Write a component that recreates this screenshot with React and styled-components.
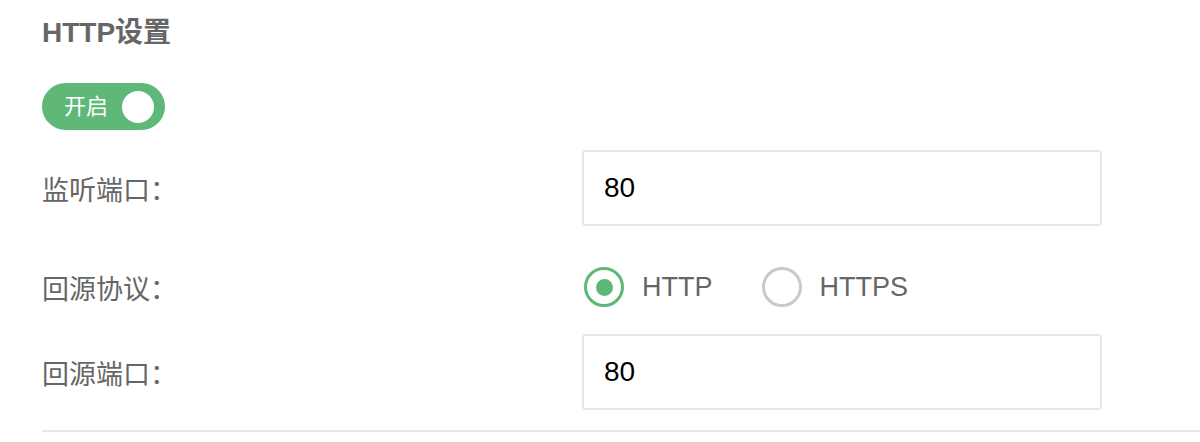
import React, { useState } from "react";
import styled, { createGlobalStyle } from "styled-components";

const GlobalStyle = createGlobalStyle`
  body {
    margin: 0;
    background: #fff;
    font-family: "Liberation Sans", "Noto Sans CJK SC", sans-serif;
  }
`;

const Page = styled.div`
  padding: 16px 0 0 42px;
`;

const Title = styled.h2`
  margin: 0;
  font-size: 28px;
  line-height: 34px;
  font-weight: bold;
  color: #666;
`;

const Switch = styled.div`
  margin-top: 33px;
  width: 123px;
  height: 47px;
  border-radius: 24px;
  background: ${p => (p.$on ? "#5fb878" : "#d2d2d2")};
  display: flex;
  align-items: center;
  justify-content: space-between;
  padding: 0 11px 0 22px;
  box-sizing: border-box;
  cursor: pointer;
`;

const SwitchText = styled.span`
  color: #fff;
  font-size: 22px;
  line-height: 1;
`;

const Knob = styled.span`
  width: 32px;
  height: 32px;
  border-radius: 50%;
  background: #fff;
`;

const Row = styled.div`
  display: flex;
  align-items: center;
  height: ${p => p.$h}px;
  margin-top: ${p => p.$mt}px;
`;

const Label = styled.div`
  width: 540px;
  font-size: 27px;
  color: #666;
`;

const Input = styled.input`
  width: 520px;
  height: 76px;
  box-sizing: border-box;
  border: 2px solid #e6e6e6;
  border-radius: 4px;
  padding: 0 20px;
  font-family: "Liberation Sans", sans-serif;
  font-size: 28px;
  color: #000;
  outline: none;
`;

const RadioGroup = styled.div`
  display: flex;
  align-items: center;
  gap: 47px;
`;

const RadioItem = styled.label`
  display: flex;
  align-items: center;
  gap: 18px;
  cursor: pointer;
  font-size: 27px;
  color: #666;
`;

const RadioCircle = styled.span`
  margin-left: 2px;
  width: 40px;
  height: 40px;
  box-sizing: border-box;
  border-radius: 50%;
  border: 3px solid ${p => (p.$checked ? "#5fb878" : "#c9c9c9")};
  display: flex;
  align-items: center;
  justify-content: center;

  &::after {
    content: "";
    width: 17px;
    height: 17px;
    border-radius: 50%;
    background: #5fb878;
    display: ${p => (p.$checked ? "block" : "none")};
  }
`;

const Divider = styled.hr`
  margin: 20px 0 0;
  border: none;
  border-top: 2px solid #e6e6e6;
`;

export default function App() {
  const [on, setOn] = useState(true);
  const [proto, setProto] = useState("HTTP");

  return (
    <Page>
      <GlobalStyle />
      <Title>HTTP设置</Title>
      <Switch $on={on} onClick={() => setOn(v => !v)}>
        <SwitchText>开启</SwitchText>
        <Knob />
      </Switch>
      <Row $h={76} $mt={20}>
        <Label>监听端口：</Label>
        <Input defaultValue="80" />
      </Row>
      <Row $h={60} $mt={31}>
        <Label>回源协议：</Label>
        <RadioGroup>
          {["HTTP", "HTTPS"].map(p => (
            <RadioItem key={p} onClick={() => setProto(p)}>
              <RadioCircle $checked={proto === p} />
              {p}
            </RadioItem>
          ))}
        </RadioGroup>
      </Row>
      <Row $h={76} $mt={17}>
        <Label>回源端口：</Label>
        <Input defaultValue="80" />
      </Row>
      <Divider />
    </Page>
  );
}
